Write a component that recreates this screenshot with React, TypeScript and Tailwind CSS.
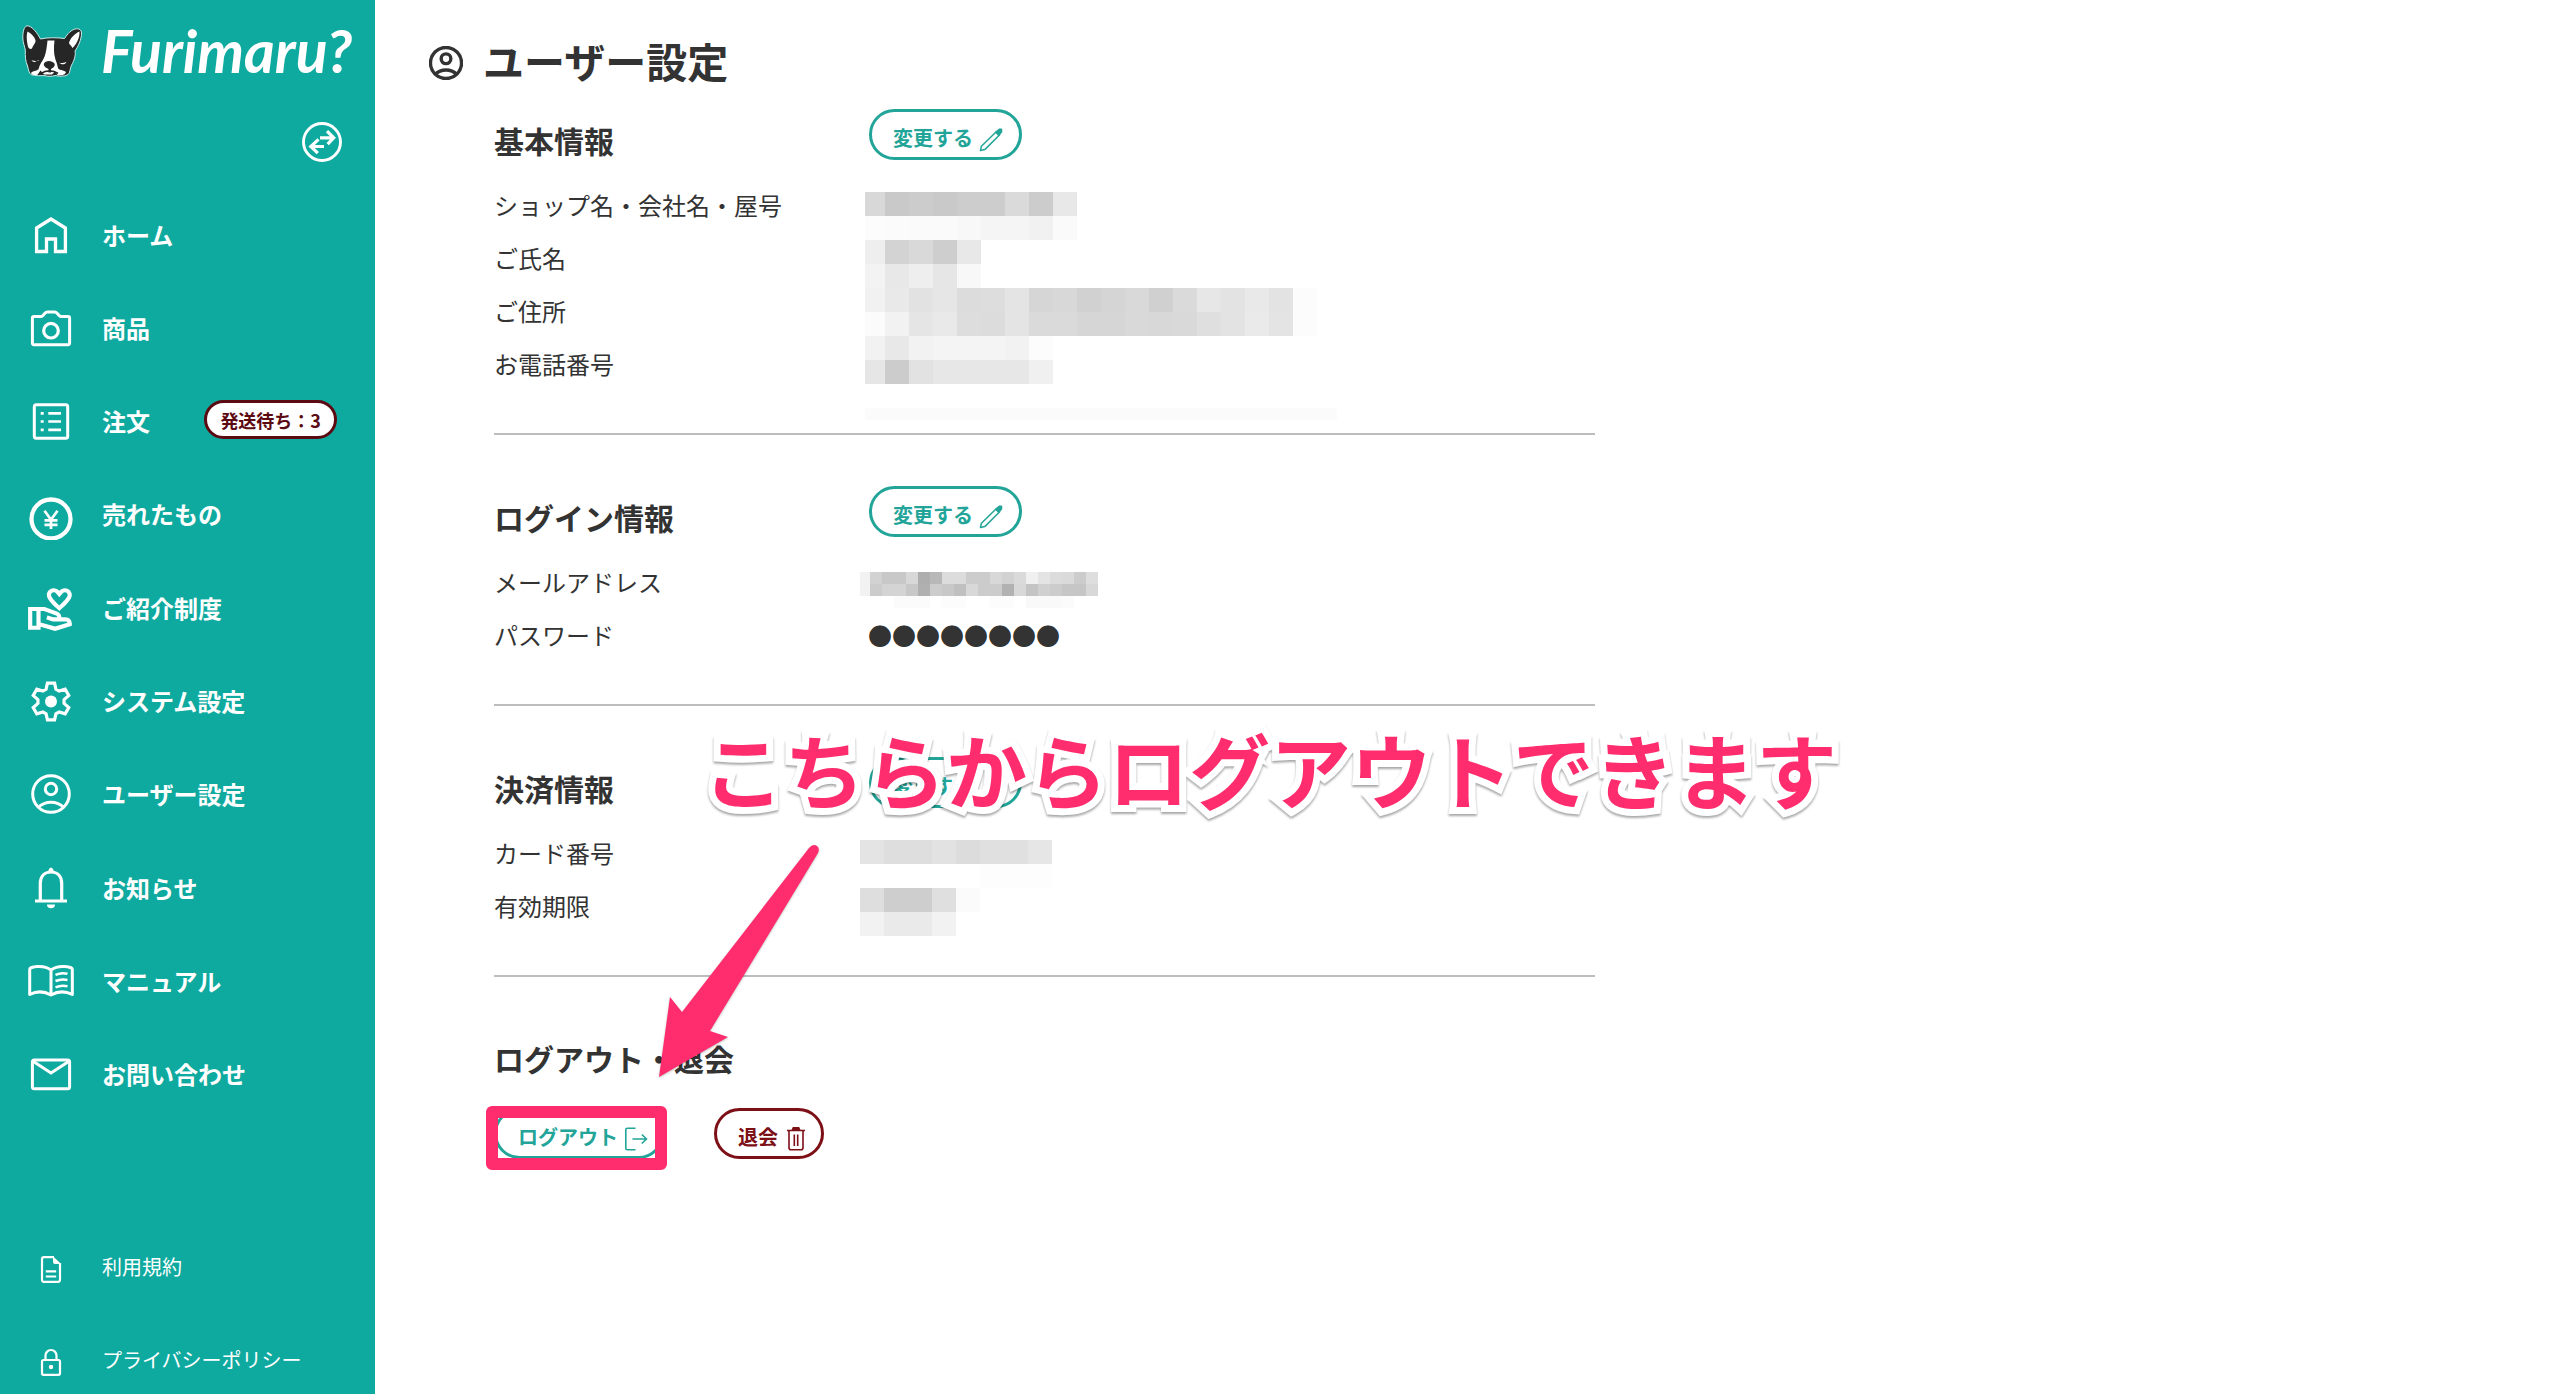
import type { ReactNode } from "react";
import { MdOutlineVolunteerActivism } from "react-icons/md";

type IconProps = { className?: string };

function Glyph({ children, width = 3 }: { children: ReactNode; width?: number }) {
  return (
    <svg viewBox="0 0 48 48" className="size-12 shrink-0" fill="none" stroke="currentColor" strokeWidth={width} aria-hidden="true">
      {children}
    </svg>
  );
}

const HomeIcon = () => (
  <Glyph width={3.3}>
    <path d="M9.6 39.5V16L24 7l14.4 9v23.5H28.5V27h-9v12.500z" />
  </Glyph>
);

const CameraIcon = () => (
  <Glyph>
    <path d="M7 11.500h6.500q1.500 0 2.400-1l2-2.300q1-1.200 2.500-1.200h7.200q1.500 0 2.500 1.200l2 2.300q.9 1 2.400 1H41q1.600 0 1.600 1.600v25q0 1.600-1.600 1.600H7q-1.600 0-1.600-1.600v-25q0-1.600 1.600-1.600z" />
    <circle cx="24" cy="25.700" r="7.300" strokeWidth="3.200" />
  </Glyph>
);

const ListIcon = () => (
  <Glyph>
    <rect x="7.300" y="5.700" width="33.400" height="33.600" rx="2" />
    <path d="M13.700 14.300h3M13.700 22.500h3M13.700 30.800h3M21.300 14.300H34M21.300 22.500H34M21.300 30.800H34" strokeWidth="2.700" />
  </Glyph>
);

const YenIcon = () => (
  <Glyph width={4.3}>
    <circle cx="24" cy="27" r="19.500" />
    <path d="M17.500 18.700 24 27.800l6.500-9.100M24 27.500V37M17.500 28.300h13M17.500 32.800h13" strokeWidth="2.700" />
  </Glyph>
);

const GEAR_PATH = Array.from({ length: 6 }, (_, i) => i * 60)
  .flatMap((a) => [
    [a - 22, 13.2],
    [a - 11, 18.8],
    [a + 11, 18.8],
    [a + 22, 13.2],
  ])
  .map(([a, r], i) => {
    const t = ((a - 90) * Math.PI) / 180;
    return `${i ? "L" : "M"}${(24 + r * Math.cos(t)).toFixed(2)} ${(22.500 + r * Math.sin(t)).toFixed(2)}`;
  })
  .join("");

const GearIcon = () => (
  <Glyph width={3.2}>
    <path d={`${GEAR_PATH}Z`} />
    <circle cx="24" cy="22.500" r="6" fill="currentColor" stroke="none" />
  </Glyph>
);

function UserIcon({ className = "size-12", width = 3 }: IconProps & { width?: number }) {
  return (
    <svg viewBox="0 0 40 40" className={className} fill="none" stroke="currentColor" strokeWidth={width} aria-hidden="true">
      <circle cx="20" cy="20" r="18.300" />
      <circle cx="20" cy="15" r="5.700" />
      <path d="M7 33.500Q12.500 28.300 20 28.300T33 33.500" />
    </svg>
  );
}

const BellIcon = () => (
  <Glyph width={3.2}>
    <path d="M13.300 36V18.500C13.300 11.500 17.500 7 24 7s10.700 4.500 10.700 11.500V36M8 36h32" />
    <path d="M20.800 7.500 22 4q2-3 4 0l1.200 3.500zM20 39.500h8a4 3.800 0 0 1-8 0z" fill="currentColor" stroke="none" />
  </Glyph>
);

const BookIcon = () => (
  <Glyph width={3}>
    <path
      d="M24 11C20 8 15 7.200 10.500 7.500 6 7.800 2.700 9 2.700 10.200V35.500C9 32.300 17 32 24 36c7-4 15-3.700 21.300-.500V10.200c0-1.200-3.300-2.400-7.800-2.700C33 7.200 28 8 24 11zV36"
      strokeLinejoin="round"
    />
    <path d="M28.500 15.800q6-2.600 12-1M28.500 22q6-2.600 12-1M28.500 28.300q6-2.600 12-1" strokeWidth="2.500" />
  </Glyph>
);

const MailIcon = () => (
  <Glyph>
    <rect x="5.400" y="8" width="37.200" height="28.700" rx="2" />
    <path d="M6 9.200 24 21 42 9.200" />
  </Glyph>
);

const FileIcon = () => (
  <Glyph width={2.2}>
    <path d="M27 14.200H17q-2 0-2 2v20.600q0 2 2 2h14q2 0 2-2V20M18.800 28.300h10.400M18.800 33.500h10.400" />
    <path d="M26 13.200 34.200 21H28q-2 0-2-2z" fill="currentColor" stroke="none" />
  </Glyph>
);

const LockIcon = () => (
  <Glyph width={2.2}>
    <rect x="15" y="24" width="18" height="14.800" rx="1.500" />
    <path d="M18.500 24v-4.500a5.500 5.500 0 0 1 11 0V24" />
    <circle cx="24" cy="31" r="2.200" fill="currentColor" stroke="none" />
  </Glyph>
);

const SwapIcon = () => (
  <svg viewBox="0 0 40 40" className="size-10" fill="none" stroke="currentColor" strokeWidth="2.900" aria-hidden="true">
    <circle cx="20" cy="20" r="18.500" />
    <path d="M18 15.800h13M25 9.200l6.700 6.600-6 6.400M22 24.500H9M16.500 17.300l-7.700 7.200 7 6.600" strokeWidth="3.200" />
  </svg>
);

const PencilIcon = () => (
  <svg viewBox="0 0 24 24" className="size-6" fill="none" stroke="currentColor" strokeWidth="1.500" strokeLinejoin="round" aria-hidden="true">
    <path d="M1.500 22.500 2.400 18.200 17.500 3.500l3.200 3.200L5.800 21.600z" />
    <path d="M16.800 4.200 20.200 1.200h2.300v2.700l-2.900 3.300z" fill="currentColor" />
  </svg>
);

const LogoutIcon = () => (
  <svg viewBox="0 0 24 24" className="size-6" fill="none" stroke="currentColor" strokeWidth="1.600" aria-hidden="true">
    <path d="M11.500 1.200H3.300Q1.800 1.200 1.800 2.700v18.600q0 1.500 1.500 1.500h8.200M8.500 12h14M17.800 7.500l4.700 4.500-4.700 4.500" />
  </svg>
);

const TrashIcon = () => (
  <svg viewBox="0 0 24 24" className="size-6" fill="none" stroke="currentColor" strokeWidth="1.600" aria-hidden="true">
    <path d="M3 3.500h18M5 3.500v17.300q0 2 2 2h10q2 0 2-2V3.500M10.300 7.500v11.500M13.700 7.500v11.500" />
    <path d="M8.500 2.700 9.300.8h5.400l.8 1.900z" fill="currentColor" />
  </svg>
);

const DogLogo = () => (
  <svg viewBox="0 0 60 52" className="h-[52px] w-[60px] shrink-0" aria-hidden="true">
    <path
      d="M5 .8C2 1.500.7 7 .8 13c.1 5 2 8.500 2.500 12C3 31 3.600 37 5.500 41c1 3.500 1.300 7 3.500 8.500 5 2 10 .8 14 1.200 3 .8 7 .8 10-.2 3.500.8 9 1.300 13-.8 2.500-2 1.700-6 3.500-9.500C52 36 54 30 53 26c3-4.500 6.500-11 6.500-18 0-3-2-4.500-5-4.200C49 4.500 45.500 9 42.500 13.500 36 12.500 25 12.300 18.500 14 15.500 8.500 10 .5 5 .8z"
      fill="#262626"
      stroke="#c9ece9"
      strokeWidth="1"
    />
    <g fill="#fff">
      <path d="M5.500 6.500C8.500 8 13 12 13.500 15.500c.3 2.500-2 4-3.500 8-1.500 1-3.500 0-4-2C5 17 4 11 5.500 6.500z" />
      <path d="M57.500 6.500C53 8.500 48 13 47 18c.5 2 2.500 2.500 3.500 5 3.500-3 7.500-10 7-16.500z" />
      <path d="M25.500 15.500h7c-.8 6.500-.8 13 .8 18.500 1.200 3 2.200 6 2.700 9 .5 2.500 5 1.500 8 4-.5 3-5 3.600-8.500 3.200L33 46.500l-3 3H22l-3.500-4-3 4.300c-3 .6-6 .4-6.500-2 1.500-1.800 5-1.500 7.500-3.500 1-5 4-8 6-12.500 1.800-5 2.300-10 3-16.300z" />
      <path d="M9.500 35.500c2.500-.5 5 .8 7.500-.5-1.500 2.500-5 2.800-7.500.5zM37 37.500c2.500 1 5 .8 7.500-.8-1 3-5 3.600-7.500.8z" />
      <path d="M5 37.500c.5 2 .5 4.500 2.500 6.500L5.500 41z" />
    </g>
    <path d="M22 38.500c1.500-3.500 8-3.500 10.500 0 1 2.500-1.500 4.500-3.500 5.500v3.500h-2.500V44c-2.500-1-5.500-3-4.500-5.500z" fill="#262626" />
    <path d="M19 48.500c5-3.500 12-3.500 17 0" fill="none" stroke="#262626" strokeWidth="1.800" />
    <path d="M10 33.500l6.500 3.500M45 34.500l-7 3" stroke="#262626" strokeWidth="1.600" />
  </svg>
);

const ReferralIcon = () => (
  <span className="flex size-12 items-center justify-center">
    <MdOutlineVolunteerActivism className="size-[50px] shrink-0" aria-hidden="true" />
  </span>
);

const SideUserIcon = () => (
  <span className="flex size-12 items-center justify-center pb-[3px]">
    <UserIcon className="size-10" />
  </span>
);

const NAV: { label: string; Icon: () => ReactNode; badge?: string }[] = [
  { label: "ホーム", Icon: HomeIcon },
  { label: "商品", Icon: CameraIcon },
  { label: "注文", Icon: ListIcon, badge: "発送待ち：3" },
  { label: "売れたもの", Icon: YenIcon },
  { label: "ご紹介制度", Icon: ReferralIcon },
  { label: "システム設定", Icon: GearIcon },
  { label: "ユーザー設定", Icon: SideUserIcon },
  { label: "お知らせ", Icon: BellIcon },
  { label: "マニュアル", Icon: BookIcon },
  { label: "お問い合わせ", Icon: MailIcon },
];

const FOOTER_NAV = [
  { label: "利用規約", Icon: FileIcon },
  { label: "プライバシーポリシー", Icon: LockIcon },
];

function Sidebar() {
  return (
    <aside className="flex min-h-screen w-[375px] shrink-0 flex-col bg-[#0faa9f] pb-[10px] pl-[27px] text-white">
      <a href="#" className="-ml-[5px] flex h-[104px] items-center gap-[19px] pb-[2px]" aria-label="Furimaru?">
        <DogLogo />
        <span className="font-[Lato] text-[59px] leading-[60px] font-bold italic">Furimaru?</span>
      </a>
      <div className="mt-[18px] flex justify-end pr-[33px]">
        <button type="button" aria-label="切り替え">
          <SwapIcon />
        </button>
      </div>
      <nav className="mt-[50px] flex h-[888px] flex-col justify-between">
        {NAV.map(({ label, Icon, badge }) => (
          <a key={label} href="#" className="flex h-12 items-center text-[24px] font-bold">
            <Icon />
            <span className="ml-[27px] pb-[3px]">{label}</span>
            {badge && (
              <span className="mr-[38px] mb-[6px] ml-auto flex h-[39px] items-center rounded-full border-[3px] border-[#5c0a12] bg-white px-[13px] pt-[2px] text-[18px] text-[#5c0a12]">
                {badge}
              </span>
            )}
          </a>
        ))}
      </nav>
      <nav className="mt-auto flex flex-col gap-[45px] pt-12">
        {FOOTER_NAV.map(({ label, Icon }) => (
          <a key={label} href="#" className="flex h-12 items-center text-[20px]">
            <Icon />
            <span className="ml-[27px]">{label}</span>
          </a>
        ))}
      </nav>
    </aside>
  );
}

/* Grey levels of the pixelated personal data, one hex pair per cell. */
const PROFILE_MOSAIC = [
  "d8 c9 cc c9 cd cd da cc e8",
  "fc fb fa fa f8 f5 f5 f1 fa",
  "ee d3 d9 ce e8",
  "f3 e8 ee e6 f8",
  "f1 e9 e2 e6 dc dd e4 d6 d8 d1 d5 d9 d0 da e7 e3 e9 e3 fc",
  "fb f2 e5 e9 dd dc e4 da da d6 d6 d9 d8 d9 df e3 ea e4 fc",
  "f2 e8 f2 f4 f4 f4 f2 fc",
  "e6 cc e2 e7 e7 e7 e7 f0",
];

const EMAIL_MOSAIC = [
  "f2 d2 c8 c8 d8 ae b8 dc dc cc cc d8 d2 da f0 e4 dc da cc de",
  "f2 cc d4 d4 c8 b0 cc c8 c0 d8 cc cc b2 d8 c4 d0 cc c6 c6 d8",
  "ff ff ff fb fb fb ff fc fc ff ff fc fc ff f9 f9 f9 fb",
];

const CARD_MOSAIC = [
  "e4 de de e2 dc e0 e0 e6",
  "ff ff ff ff ff fd fd fd",
  "de ce ce df fb",
  "f2 ea ea f2",
];

function Mosaic({ rows, cell, className = "" }: { rows: string[]; cell: string; className?: string }) {
  return (
    <div className={className} aria-hidden="true">
      {rows.map((row, y) => (
        <div key={y} className="flex">
          {row.split(" ").map((level, x) => (
            <span key={x} className={cell} style={{ backgroundColor: `#${level}${level}${level}` }} />
          ))}
        </div>
      ))}
    </div>
  );
}

function PillButton({ label, icon, className }: { label: string; icon: ReactNode; className: string }) {
  return (
    <button
      type="button"
      className={`flex h-[51px] items-center gap-[6px] rounded-full border-[3px] bg-white pt-[6px] pl-[21px] text-[20px] leading-6 font-bold ${className}`}
    >
      {label}
      <span className="pt-1">{icon}</span>
    </button>
  );
}

function Section({ title, labels, children }: { title: string; labels: string[]; children: ReactNode }) {
  return (
    <section className="border-b-2 border-[#bdbdbd] pb-[41px] not-first:pt-[51px]">
      <div className="flex items-end">
        <h2 className="w-[375px] text-[30px] leading-10 font-bold">{title}</h2>
        <PillButton label="変更する" icon={<PencilIcon />} className="border-[#22a598] pr-4 text-[#22a598]" />
      </div>
      <div className="mt-[20px] flex">
        <ul className="w-[366px] text-[24px]">
          {labels.map((label) => (
            <li key={label} className="flex h-[53px] items-center pb-[3px]">
              {label}
            </li>
          ))}
        </ul>
        <div>{children}</div>
      </div>
    </section>
  );
}

function Callout() {
  return (
    <>
      <p className="absolute top-[718px] left-[328px] text-[81px] leading-[100px] font-bold whitespace-nowrap text-[#ff2d6e] drop-shadow-[0_2px_1px_rgba(0,0,0,0.35)] [-webkit-text-stroke:14px_white] [paint-order:stroke_fill] [stroke-linejoin:round]">
        こちらからログアウトできます
      </p>
      <svg viewBox="0 0 170 240" className="absolute top-[840px] left-[279px] h-[240px] w-[170px] drop-shadow-[0_1px_1px_rgba(0,0,0,0.25)]" aria-hidden="true">
        <path d="M155 8Q159 3 163 6q3 2 1 7L56 191l18 6L5 237l11-80 12 15z" fill="#ff2d6e" />
      </svg>
    </>
  );
}

export default function App() {
  return (
    <div className="flex min-h-screen bg-white font-['Noto_Sans_CJK_JP',sans-serif] text-[#333]">
      <Sidebar />
      <main className="relative grow">
        <h1 className="flex h-[109px] items-start gap-5 pt-[35px] pl-[54px] text-[41px] leading-[50px] font-bold">
          <span className="pt-[11px]">
            <UserIcon className="size-[34px]" width={4} />
          </span>
          ユーザー設定
        </h1>
        <div className="ml-[119px] max-w-[1101px]">
          <Section title="基本情報" labels={["ショップ名・会社名・屋号", "ご氏名", "ご住所", "お電話番号"]}>
            <Mosaic rows={PROFILE_MOSAIC} cell="h-6 w-6 first:w-5" className="mt-3 ml-[5px]" />
            <div className="mt-6 -mb-9 ml-[5px] h-3 w-[472px] bg-[#fbfbfb]" />
          </Section>
          <Section title="ログイン情報" labels={["メールアドレス", "パスワード"]}>
            <div className="h-[53px] pt-[15px]">
              <Mosaic rows={EMAIL_MOSAIC} cell="h-3 w-3 first:w-[10px]" />
            </div>
            <div className="flex h-[53px] items-center pb-[3px] pl-2 text-[24px]">●●●●●●●●</div>
          </Section>
          <Section title="決済情報" labels={["カード番号", "有効期限"]}>
            <Mosaic rows={CARD_MOSAIC} cell="size-6" className="mt-3 -mb-2" />
          </Section>
          <section className="pt-[61px]">
            <h2 className="text-[30px] leading-10 font-bold">ログアウト・退会</h2>
            <div className="mt-[30px] flex gap-[50px]">
              <div className="relative">
                <PillButton label="ログアウト" icon={<LogoutIcon />} className="border-[#22a598] pr-[13px] text-[#22a598]" />
                <span className="pointer-events-none absolute -top-[2px] -right-[3px] -bottom-[11px] -left-2 rounded-md border-[12px] border-[#ff2d6e]" />
              </div>
              <PillButton label="退会" icon={<TrashIcon />} className="border-[#7d0f16] pr-[13px] text-[#7d0f16]" />
            </div>
          </section>
        </div>
        <Callout />
      </main>
    </div>
  );
}
